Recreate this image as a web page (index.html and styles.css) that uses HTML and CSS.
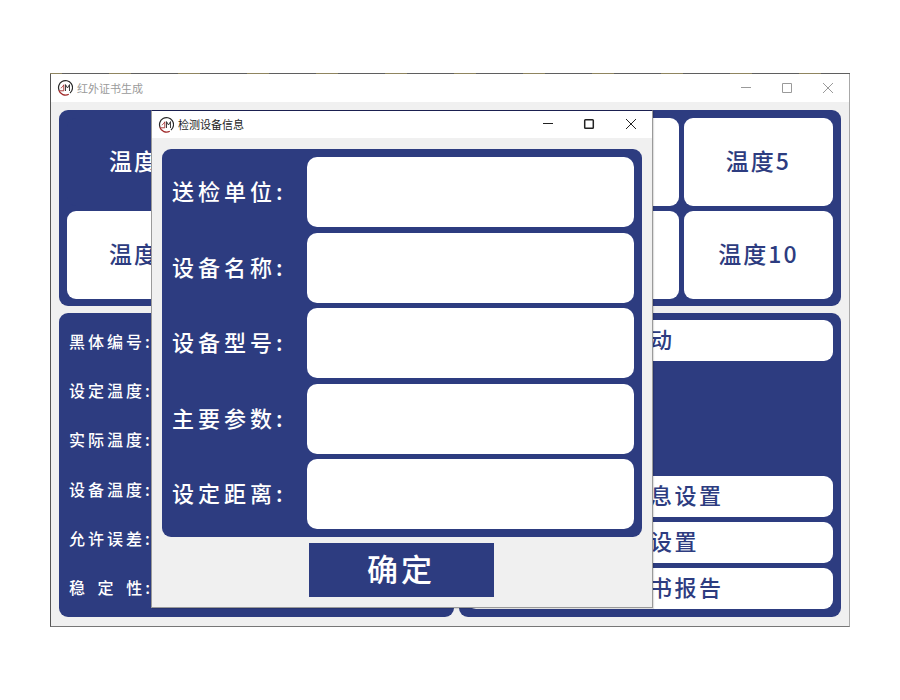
FILE: index.html
```html
<!DOCTYPE html>
<html lang="zh">
<head>
<meta charset="utf-8">
<title>红外证书生成</title>
<link rel="stylesheet" href="styles.css">
</head>
<body>
<svg class="defs" width="0" height="0" aria-hidden="true">
  <symbol id="logo" viewBox="0 0 16 16">
    <path d="M2.200 10.600A7 7 0 1 1 13 13" fill="none" stroke="#2a2a2a" stroke-width="1.200"/>
    <path d="M1.800 10.300A7 7 0 0 0 11.800 14.300" fill="none" stroke="#a02a2a" stroke-width="1.200"/>
    <path d="M2.500 10.800H6.800V4.800C6 6.400 5 7.400 3.800 8" fill="none" stroke="#a02a2a" stroke-width=".9"/>
    <path d="M8.500 11V4.600L10.500 8L12.500 4.600V11" fill="none" stroke="#2a2a2a" stroke-width=".9"/>
  </symbol>
</svg>
<div class="window main">
  <header class="titlebar main-bar">
    <svg class="logo"><use href="#logo"/></svg>
    <span class="title-text">红外证书生成</span>
    <div class="controls muted">
      <svg viewBox="0 0 10 10" class="ctl"><path d="M0 4.500H10"/></svg>
      <svg viewBox="0 0 10 10" class="ctl"><path d="M.5 .5H9.500V9.500H.5Z"/></svg>
      <svg viewBox="0 0 10 10" class="ctl"><path d="M0 0L10 10M10 0L0 10"/></svg>
    </div>
  </header>
  <div class="main-body">
    <section class="panel temps">
      <div class="cell">温度1</div><div class="cell"></div><div class="cell"></div><div class="cell"></div><div class="cell">温度5</div>
      <div class="cell">温度6</div><div class="cell"></div><div class="cell"></div><div class="cell"></div><div class="cell">温度10</div>
    </section>
    <div class="lower">
      <section class="panel info">
        <div class="info-label">黑体编号:</div>
        <div class="info-label">设定温度:</div>
        <div class="info-label">实际温度:</div>
        <div class="info-label">设备温度:</div>
        <div class="info-label">允许误差:</div>
        <div class="info-label">稳 定 性:</div>
      </section>
      <section class="panel actions">
        <button class="action first">启动</button>
        <button class="action">设备信息设置</button>
        <button class="action">参数设置</button>
        <button class="action">生成证书报告</button>
      </section>
    </div>
  </div>
</div>
<div class="window dialog">
  <header class="titlebar dialog-bar">
    <svg class="logo"><use href="#logo"/></svg>
    <span class="title-text dark">检测设备信息</span>
    <div class="controls">
      <svg viewBox="0 0 10 10" class="ctl"><path d="M0 4.500H10"/></svg>
      <svg viewBox="0 0 10 10" class="ctl strong"><rect x=".7" y=".7" width="8.600" height="8.600" rx=".8"/></svg>
      <svg viewBox="0 0 10 10" class="ctl"><path d="M0 0L10 10M10 0L0 10"/></svg>
    </div>
  </header>
  <div class="dialog-body">
    <section class="panel form">
      <label class="row"><span class="row-label">送检单位:</span><span class="field"></span></label>
      <label class="row"><span class="row-label">设备名称:</span><span class="field"></span></label>
      <label class="row"><span class="row-label">设备型号:</span><span class="field"></span></label>
      <label class="row"><span class="row-label">主要参数:</span><span class="field"></span></label>
      <label class="row"><span class="row-label">设定距离:</span><span class="field"></span></label>
    </section>
    <button class="confirm">确定</button>
  </div>
</div>
</body>
</html>
```
FILE: styles.css
```css
* { box-sizing: border-box; }
html, body { margin: 0; padding: 0; background: #fff; }
body {
  width: 900px; height: 700px; position: relative; overflow: hidden;
  font-family: "Noto Sans CJK SC", "Liberation Sans", sans-serif;
}
.defs { position: absolute; }
.window { position: absolute; display: flex; flex-direction: column; background: #f0f0f0; }
.main {
  left: 50px; top: 73px; width: 800px; height: 554px;
  border: 1px solid #a8a8a8; border-left-color: #555; border-top-color: #606060; border-bottom-color: #777;
}
.main::before {
  content: ""; position: absolute; left: -1px; right: -1px; top: -1px; height: 1px;
  background: repeating-linear-gradient(90deg, #8f8560 0 12px, #5f5f5f 12px 59px, #8f8560 59px 69px);
}
.dialog {
  left: 151px; top: 110px; width: 502px; height: 498px;
  border: 1px solid #9a9a9a; border-top-color: #1a1f50; box-shadow: 1px 1px 1px rgba(0,0,0,.12);
}
.titlebar { display: flex; align-items: center; background: #fff; flex: none; }
.main-bar { height: 28px; padding-left: 6px; }
.dialog-bar { height: 27px; padding-left: 6px; }
.logo { width: 16px; height: 16px; margin-right: 4px; flex: none; }
.title-text { font-size: 11px; color: #9a9a9a; line-height: 1; }
.title-text.dark { color: #222; }
.controls { margin-left: auto; display: flex; align-items: center; }
.ctl { width: 10px; height: 10px; fill: none; stroke: #222; stroke-width: 1; overflow: visible; }
.ctl.strong { stroke-width: 1.500; margin-right: 1px; }
.main-bar .controls { gap: 31px; padding-right: 16px; }
.main-bar .ctl { margin-top: -1px; }
.dialog-bar .controls { gap: 31px; padding-right: 16px; }
.dialog-bar .ctl { margin-top: -1px; }
.muted .ctl { stroke: #9a9a9a; }
.main-body { flex: 1; padding: 8px 8px 9px 8px; display: flex; flex-direction: column; gap: 7px; }
.panel { background: #2d3c80; border-radius: 9px; }
.temps {
  height: 196px; padding: 8px; display: grid;
  grid-template-columns: repeat(5, 1fr); grid-template-rows: 88px 88px; gap: 5px;
}
.cell {
  background: #fff; border-radius: 9px; display: flex; align-items: center; justify-content: center;
  padding-bottom: 4px;
  color: #2d3c80; font-size: 23px; font-weight: 500; letter-spacing: 2px;
}
.temps .cell:first-child { background: #2d3c80; color: #fff; }
.lower { flex: 1; display: flex; gap: 5px; }
.info {
  width: 395px; padding: 4px 10px 6px; display: flex; flex-direction: column; justify-content: space-between;
}
.info-label {
  height: 48.500px; display: flex; align-items: center; color: #fff;
  font-size: 16px; font-weight: 500; letter-spacing: 3px; word-spacing: 3px; white-space: pre;
}
.actions { flex: 1; padding: 7px 8px 8px; display: flex; flex-direction: column; gap: 5px; }
.action {
  height: 41px; border: 0; background: #fff; border-radius: 9px; padding: 0 0 5px;
  font: 500 22px "Noto Sans CJK SC", sans-serif; letter-spacing: 2.500px; color: #2d3c80;
}
.action.first { margin-bottom: 110px; }
.dialog-body { flex: 1; padding: 11px 10px 10px; display: flex; flex-direction: column; align-items: center; }
.form {
  width: 480px; height: 388px; padding: 8px 8px 8px 10px; display: flex; flex-direction: column; justify-content: space-between;
}
.row { display: flex; align-items: center; height: 70px; }
.row-label {
  width: 135px; flex: none; padding-bottom: 4px; color: #fff;
  font-size: 22px; font-weight: 500; letter-spacing: 4px;
}
.field { flex: 1; height: 70px; background: #fff; border-radius: 10px; }
.confirm {
  width: 185px; height: 54px; margin: 6px 2px 0 0; background: #2d3c80; border: 0; padding: 0 0 5px;
  font: 500 31px "Noto Sans CJK SC", sans-serif; letter-spacing: 3px; color: #fff;
}
```
